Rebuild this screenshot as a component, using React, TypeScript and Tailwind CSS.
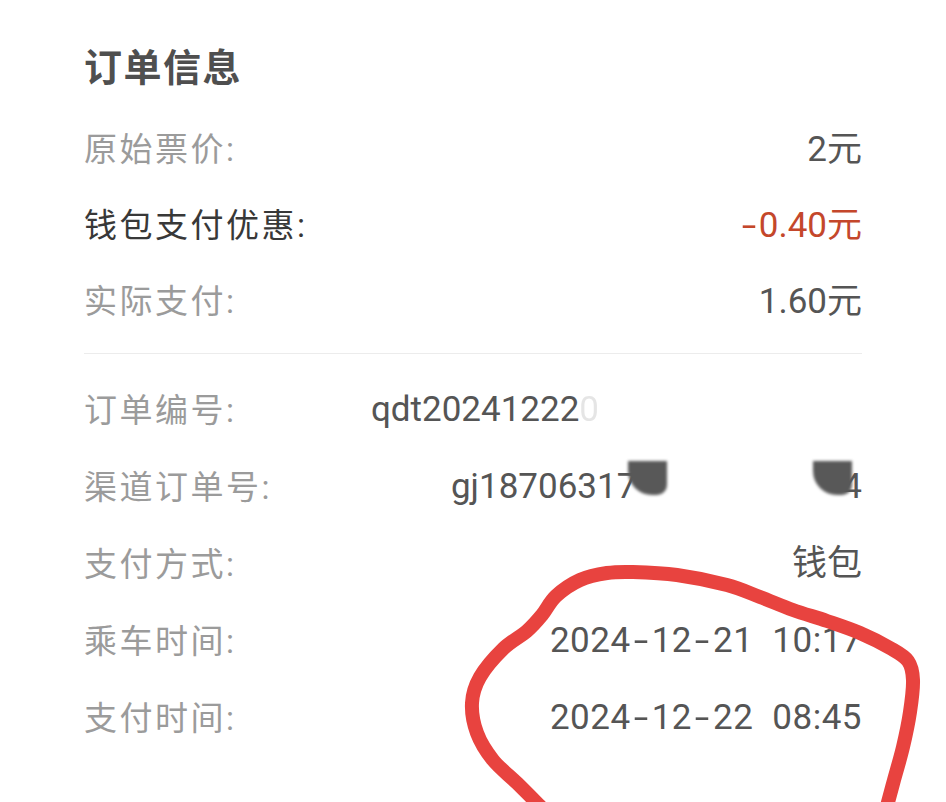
import React from "react";

const pts: [number, number][] = [
  [540, 806], [517, 783], [493, 760], [477, 733], [472, 703], [480, 677], [503, 649],
  [527, 631], [542, 615], [556, 596], [580, 580], [607, 573], [633, 572], [677, 575],
  [727, 585], [760, 597], [793, 610], [827, 621], [860, 633], [890, 648], [908, 661],
  [913, 680], [910, 712], [903, 747], [894, 780], [887, 806],
];

function catmull(p: [number, number][]) {
  let d = `M${p[0][0]},${p[0][1]}`;
  for (let i = 0; i < p.length - 1; i++) {
    const p0 = p[i - 1] || p[i];
    const p1 = p[i];
    const p2 = p[i + 1];
    const p3 = p[i + 2] || p2;
    const c1x = p1[0] + (p2[0] - p0[0]) / 6;
    const c1y = p1[1] + (p2[1] - p0[1]) / 6;
    const c2x = p2[0] - (p3[0] - p1[0]) / 6;
    const c2y = p2[1] - (p3[1] - p1[1]) / 6;
    d += ` C${c1x},${c1y} ${c2x},${c2y} ${p2[0]},${p2[1]}`;
  }
  return d;
}

const font = { fontFamily: 'Roboto, "Noto Sans CJK SC", sans-serif' };

function Dash() {
  return <span className="inline-block w-[21px] text-center scale-x-[1.5]">-</span>;
}

function DateTime({ d, t }: { d: [string, string, string]; t: string }) {
  return (
    <span className="flex items-center tracking-[0.5px]">
      <span>{d[0]}</span>
      <Dash />
      <span>{d[1]}</span>
      <Dash />
      <span>{d[2]}</span>
      <span className="inline-block w-[19px]" />
      <span>{t}</span>
    </span>
  );
}

function Row({
  label,
  value,
  dark,
  h,
}: {
  label: string;
  value: React.ReactNode;
  dark?: boolean;
  h: string;
}) {
  return (
    <div className={`flex items-center justify-between ${h}`}>
      <span
        className={`text-[33px] tracking-[2.5px] ${dark ? "text-[#383838]" : "text-[#9b9b9b]"}`}
      >
        {label}
      </span>
      <span className="relative text-[35px] text-[#555555] whitespace-pre">{value}</span>
    </div>
  );
}

export default function App() {
  return (
    <div
      className="relative w-[946px] h-[802px] overflow-hidden bg-white"
      style={font}
    >
      <div className="px-[84px] pt-[46px]">
        <div className="h-[44px] flex items-center text-[38px] font-bold tracking-[1.5px] text-[#4f4f4f]">
          订单信息
        </div>
        <div className="mt-[22px]">
          <Row h="h-[76px]" label="原始票价:" value="2元" />
          <Row
            h="h-[76px]"
            label="钱包支付优惠:"
            dark
            value={
              <span className="flex items-center text-[#c4472b]">
                <span className="inline-block w-[20px] text-center scale-x-[1.5]">-</span>
                <span>0.40元</span>
              </span>
            }
          />
          <Row h="h-[76px]" label="实际支付:" value="1.60元" />
        </div>
        <div className="mt-[13px] h-px bg-[#ececec]" />
        <div className="mt-[18px]">
          <Row
            h="h-[77px]"
            label="订单编号:"
            value={
              <span className="flex items-center">
                <span>qdt20241222</span>
                <span className="text-[#555555] opacity-15">0</span>
                <span className="inline-block w-[263px]" />
              </span>
            }
          />
          <Row
            h="h-[77px]"
            label="渠道订单号:"
            value={
              <span className="relative flex items-center">
                <span>gj18706317</span>
                <span className="inline-block w-[206px]" />
                <span>4</span>
                <span className="absolute right-[195px] top-[0px] w-[39px] h-[34px] bg-[#585858] rounded-bl-[24px] rounded-br-[10px] blur-[1.5px]" />
                <span className="absolute right-[10px] top-[0px] w-[39px] h-[34px] bg-[#585858] rounded-bl-[24px] rounded-br-[10px] blur-[1.5px]" />
              </span>
            }
          />
          <Row h="h-[77px]" label="支付方式:" value="钱包" />
          <Row h="h-[77px]" label="乘车时间:" value={<DateTime d={["2024", "12", "21"]} t="10:17" />} />
          <Row h="h-[77px]" label="支付时间:" value={<DateTime d={["2024", "12", "22"]} t="08:45" />} />
        </div>
      </div>
      <svg
        className="absolute inset-0 pointer-events-none"
        width="946"
        height="802"
        viewBox="0 0 946 802"
      >
        <path
          d={catmull(pts)}
          fill="none"
          stroke="#e8433f"
          strokeWidth="14"
          strokeLinecap="round"
          strokeLinejoin="round"
        />
      </svg>
    </div>
  );
}
